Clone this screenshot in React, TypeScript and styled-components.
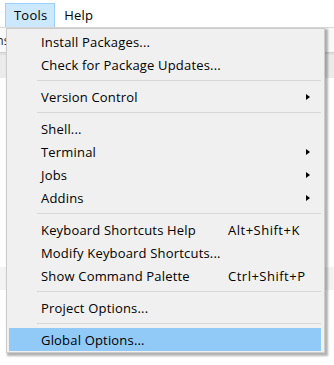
import React from 'react';
import styled, {createGlobalStyle, css} from "styled-components";

type MenuEntry =
    | { kind: 'item', label: string, shortcut?: string, submenu?: boolean, active?: boolean }
    | { kind: 'separator' }

const toolsMenu: Array<MenuEntry> = [
    {kind: 'item', label: 'Install Packages...'},
    {kind: 'item', label: 'Check for Package Updates...'},
    {kind: 'separator'},
    {kind: 'item', label: 'Version Control', submenu: true},
    {kind: 'separator'},
    {kind: 'item', label: 'Shell...'},
    {kind: 'item', label: 'Terminal', submenu: true},
    {kind: 'item', label: 'Jobs', submenu: true},
    {kind: 'item', label: 'Addins', submenu: true},
    {kind: 'separator'},
    {kind: 'item', label: 'Keyboard Shortcuts Help', shortcut: 'Alt+Shift+K'},
    {kind: 'item', label: 'Modify Keyboard Shortcuts...'},
    {kind: 'item', label: 'Show Command Palette', shortcut: 'Ctrl+Shift+P'},
    {kind: 'separator'},
    {kind: 'item', label: 'Project Options...'},
    {kind: 'separator'},
    {kind: 'item', label: 'Global Options...', active: true},
]

const GlobalStyle = createGlobalStyle`
    body {
        margin: 0;
        background: #ffffff;
        font-family: "Open Sans", "Noto Sans", sans-serif;
        font-size: 13px;
        color: #000000;
    }
`

const App: React.FC = () => {
    return (
        <>
            <GlobalStyle/>
            <Window>
                <MenuBar>
                    <MenuBarItem open>Tools</MenuBarItem>
                    <MenuBarItem>Help</MenuBarItem>
                </MenuBar>
                <Toolbar>
                    <ToolbarLabel>Addins</ToolbarLabel>
                </Toolbar>
                <TabStrip/>
                <Editor>
                    <EditorBand/>
                </Editor>

                <Dropdown>
                    {toolsMenu.map((entry, index) => {
                        if (entry.kind === 'separator') {
                            return <Separator key={index}/>
                        }
                        return <Item key={index} active={entry.active}>
                            <Label>{entry.label}</Label>
                            <Shortcut>{entry.shortcut}</Shortcut>
                            {entry.submenu ? <Arrow/> : <span/>}
                        </Item>
                    })}
                </Dropdown>
            </Window>
        </>
    );
};

export default App;

const Window = styled.div`
    position: relative;
    width: 334px;
    height: 365px;
    overflow: hidden;
    background: #ffffff;
    display: flex;
    flex-direction: column;
`

const MenuBar = styled.div`
    display: flex;
    align-items: stretch;
    height: 24px;
    padding: 3px 0 0 5px;
    border-bottom: 1px solid #d9d9d9;
    background: #ffffff;
`

const MenuBarItem = styled.div<{ open?: boolean }>`
    display: flex;
    align-items: center;
    padding: 0 7px 1px 8px;
    border: 1px solid transparent;
    border-bottom: none;
    line-height: 1;
    letter-spacing: 0.2px;

    ${props => props.open && css`
        background: #cce8ff;
        border-color: #99d1ff;
    `}
`

const Toolbar = styled.div`
    display: flex;
    align-items: center;
    height: 24px;
    background: #f9f9f9;
    border-bottom: 1px solid #d0d0d0;
    overflow: hidden;
`

const ToolbarLabel = styled.span`
    margin-left: -29px;
    font-size: 12px;
    color: #1e1e1e;
`

const TabStrip = styled.div`
    height: 23px;
    background: #ebebeb;
    border-top: 2px solid #e0e0e0;
`

const Editor = styled.div`
    flex: 1;
    background: #ffffff;
    padding-top: 189px;
`

const EditorBand = styled.div`
    height: 23px;
    background: #f3f3f3;
`

const Dropdown = styled.div`
    position: absolute;
    left: 6px;
    top: 28px;
    width: 312px;
    padding: 1px 3px 1px 2px;
    background: #f0f0f0;
    border: 1px solid #cccccc;
    box-shadow: 2px 2px 2px 1px rgba(0, 0, 0, 0.3);
`

const Item = styled.div<{ active?: boolean }>`
    display: grid;
    grid-template-columns: 187px 1fr 4px;
    align-items: center;
    height: 23px;
    padding: 0 11px 0 32px;
    white-space: nowrap;
    letter-spacing: 0.18px;
    background: ${props => props.active ? '#91c9f7' : 'transparent'};
`

const Label = styled.span``

const Shortcut = styled.span`
    letter-spacing: 0.5px;
`

const Arrow = styled.span`
    width: 0;
    height: 0;
    border-left: 4px solid #000000;
    border-top: 3.5px solid transparent;
    border-bottom: 3.5px solid transparent;
`

const Separator = styled.div`
    height: 1px;
    margin: 4px 0 4px 28px;
    background: #d7d7d7;
`
